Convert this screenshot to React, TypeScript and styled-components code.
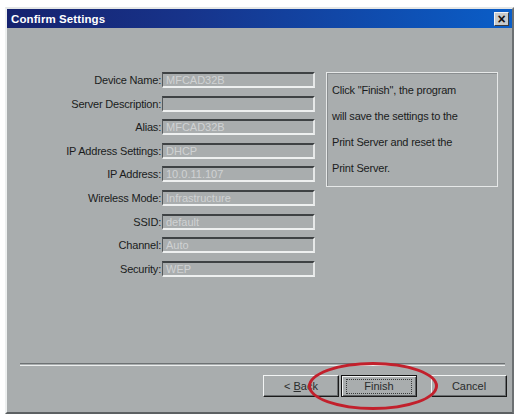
import React from "react";
import styled, { createGlobalStyle } from "styled-components";

const GlobalStyle = createGlobalStyle`
  html, body {
    margin: 0;
    padding: 0;
    background: #ffffff;
  }
  body {
    font-family: "Liberation Sans", Arial, sans-serif;
  }
`;

interface FieldProps {
  label: string;
  value: string;
}

const fields: FieldProps[] = [
  { label: "Device Name:", value: "MFCAD32B" },
  { label: "Server Description:", value: "" },
  { label: "Alias:", value: "MFCAD32B" },
  { label: "IP Address Settings:", value: "DHCP" },
  { label: "IP Address:", value: "10.0.11.107" },
  { label: "Wireless Mode:", value: "Infrastructure" },
  { label: "SSID:", value: "default" },
  { label: "Channel:", value: "Auto" },
  { label: "Security:", value: "WEP" },
];

const infoLines = [
  'Click "Finish", the program',
  "will save the settings to the",
  "Print Server and reset the",
  "Print Server.",
];

export default function App() {
  return (
    <>
      <GlobalStyle />
      <Page>
        <Window>
          <TitleBar>
            <Title>Confirm Settings</Title>
            <CloseButton>×</CloseButton>
          </TitleBar>
          <Body>
            <Content>
              <FormGrid>
                {fields.map((f) => (
                  <React.Fragment key={f.label}>
                    <Label>{f.label}</Label>
                    <Field>{f.value}</Field>
                  </React.Fragment>
                ))}
              </FormGrid>
              <InfoBox>
                {infoLines.map((line) => (
                  <InfoLine key={line}>{line}</InfoLine>
                ))}
              </InfoBox>
            </Content>
            <Footer>
              <Separator />
              <ButtonRow>
                <Button>
                  <span>
                    &lt; <u>B</u>ack
                  </span>
                </Button>
                <FinishWrap>
                  <Button $isDefault>
                    <Focus>Finish</Focus>
                  </Button>
                  <Circle />
                </FinishWrap>
                <Button $spaced>Cancel</Button>
              </ButtonRow>
            </Footer>
          </Body>
        </Window>
      </Page>
    </>
  );
}

const Page = styled.div`
  width: 523px;
  height: 418px;
  padding: 7px 9px 4px 5px;
  box-sizing: border-box;
  background: #ffffff;
`;

const Window = styled.div`
  width: 100%;
  height: 100%;
  box-sizing: border-box;
  display: flex;
  flex-direction: column;
  background: #a9adae;
  border-top: 2px solid #e4e6e6;
  border-left: 2px solid #eef0f0;
  border-right: 2px solid #6c7072;
  border-bottom: 2px solid #5c6062;
`;

const TitleBar = styled.div`
  height: 19px;
  display: flex;
  align-items: center;
  justify-content: space-between;
  padding: 0 3px 0 4px;
  background: linear-gradient(to right, #16226e 0%, #17338a 35%, #0a5ec8 100%);
`;

const Title = styled.div`
  color: #ffffff;
  font-weight: bold;
  font-size: 11.5px;
  letter-spacing: 0.1px;
`;

const CloseButton = styled.div`
  width: 13px;
  height: 12px;
  display: flex;
  align-items: center;
  justify-content: center;
  background: #c8cbcc;
  border-top: 1px solid #f4f4f4;
  border-left: 1px solid #f4f4f4;
  border-right: 1px solid #3c3c3c;
  border-bottom: 1px solid #3c3c3c;
  font-size: 14px;
  font-weight: bold;
  line-height: 1;
  color: #111;
`;

const Body = styled.div`
  flex: 1;
  display: flex;
  flex-direction: column;
`;

const Content = styled.div`
  display: flex;
  align-items: flex-start;
  padding-top: 44px;
`;

const FormGrid = styled.div`
  display: grid;
  grid-template-columns: 154px 153px;
  column-gap: 1px;
  row-gap: 7.6px;
`;

const Label = styled.div`
  font-size: 11px;
  color: #1a1c1c;
  text-align: right;
  line-height: 16px;
  height: 16px;
  white-space: nowrap;
  letter-spacing: -0.2px;
`;

const Field = styled.div`
  height: 16px;
  box-sizing: border-box;
  border-top: 2px solid #3e4244;
  border-left: 1px solid #55595b;
  border-right: 2px solid #e6e8e8;
  border-bottom: 2px solid #eef0f0;
  padding-left: 3px;
  font-size: 11px;
  line-height: 12px;
  color: #d0d2d3;
  white-space: nowrap;
  overflow: hidden;
`;

const InfoBox = styled.div`
  margin-left: 11px;
  width: 172px;
  height: 115px;
  box-sizing: border-box;
  border: 1px solid #e6e8e8;
  box-shadow: inset 1px 1px 0 #8a8e90;
  padding: 4px 0 0 5px;
`;

const InfoLine = styled.div`
  font-size: 11px;
  line-height: 26px;
  color: #1a1c1c;
  white-space: nowrap;
  letter-spacing: -0.2px;
`;

const Footer = styled.div`
  margin-top: auto;
  padding-bottom: 15px;
`;

const Separator = styled.div`
  margin: 0 7px 0 13px;
  height: 1px;
  border-top: 1px solid #6e7274;
  border-bottom: 1px solid #eceeee;
`;

const ButtonRow = styled.div`
  display: flex;
  justify-content: flex-end;
  gap: 2px;
  margin-top: 9px;
  padding-right: 5px;
`;

const Button = styled.div<{ $isDefault?: boolean; $spaced?: boolean }>`
  width: 76px;
  height: 22px;
  box-sizing: border-box;
  display: flex;
  align-items: center;
  justify-content: center;
  font-size: 11px;
  color: #2a2c2c;
  background: #a9adae;
  margin-left: ${(p) => (p.$spaced ? "12px" : "0")};
  border-top: 1px solid ${(p) => (p.$isDefault ? "#111" : "#f2f4f4")};
  border-left: 1px solid ${(p) => (p.$isDefault ? "#111" : "#f2f4f4")};
  border-right: 1px solid #1a1a1a;
  border-bottom: 1px solid #1a1a1a;
  box-shadow: ${(p) =>
    p.$isDefault
      ? "inset 1px 1px 0 #f2f4f4, inset -1px -1px 0 #5e6264"
      : "inset -1px -1px 0 #6a6e70"};
  white-space: pre;
`;

const Focus = styled.span`
  display: flex;
  align-items: center;
  justify-content: center;
  width: 64px;
  height: 13px;
  border: 1px dotted #3a3c3c;
`;

const FinishWrap = styled.div`
  position: relative;
`;

const Circle = styled.div`
  position: absolute;
  left: -33px;
  top: -13px;
  width: 130px;
  height: 48px;
  border: 3px solid #c2202c;
  border-radius: 50%;
  box-sizing: border-box;
  pointer-events: none;
`;
